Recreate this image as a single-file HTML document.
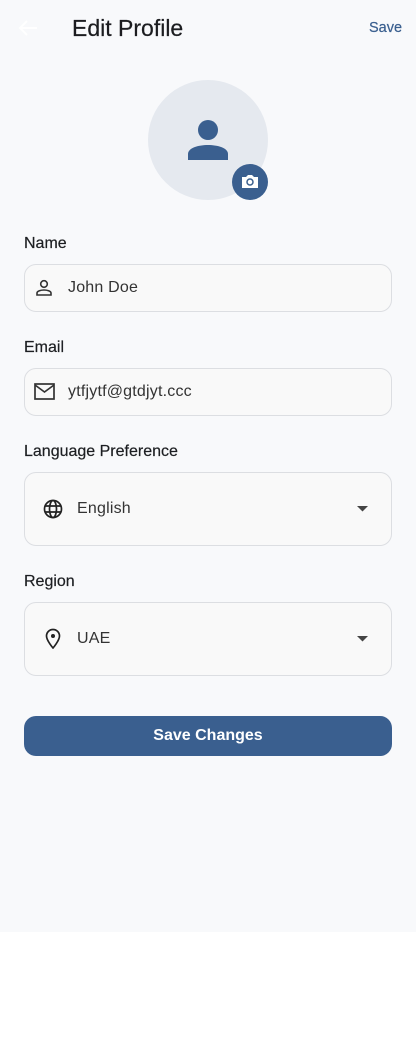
<!DOCTYPE html>
<html><head><meta charset="utf-8"><style>
*{box-sizing:border-box;margin:0;padding:0}
body{width:416px;height:1052px;background:#fff;font-family:"Liberation Sans",sans-serif;position:relative;overflow:hidden}
.bg{position:absolute;left:0;top:0;width:416px;height:932px;background:#f8f9fb}
.a{position:absolute}
.lbl{position:absolute;left:24px;font-size:16px;color:#1d1f22;-webkit-text-stroke:0.2px #1d1f22}
.box{position:absolute;left:24px;width:368px;border:1px solid #dcdee2;border-radius:12px;background:#f9f9f9}
.txt{position:absolute;font-size:16px;color:#333;letter-spacing:.2px}
</style></head><body>
<div class="bg"></div>
<svg class="a" style="left:17px;top:18px" width="22" height="20" viewBox="0 0 22 20"><path d="M20 10H3M10 3L3 10L10 17" stroke="#fff" stroke-width="2" fill="none"/></svg>
<div class="a" style="left:72px;top:15px;font-size:23px;color:#1c1d20;-webkit-text-stroke:0.2px #1c1d20">Edit Profile</div>
<div class="a" style="left:369px;top:20px;font-size:14.5px;color:#3a5f8f;-webkit-text-stroke:0.2px #3a5f8f">Save</div>
<div class="a" style="left:148px;top:80px;width:120px;height:120px;border-radius:50%;background:#e5e9ef"></div>
<svg class="a" style="left:186px;top:118px" width="44" height="44" viewBox="0 0 44 44"><circle cx="22" cy="12" r="10" fill="#3a5f8f"/><path d="M2 42V36C2 30 12 27 22 27S42 30 42 36V42Z" fill="#3a5f8f"/></svg>
<div class="a" style="left:232px;top:164px;width:36px;height:36px;border-radius:50%;background:#3a5f8f"></div>
<svg class="a" style="left:241px;top:173px" width="18" height="16" viewBox="0 0 18 16"><path d="M1 4h4l2-2h4l2 2h4v11H1Z" fill="#fff"/><circle cx="9" cy="9" r="3" fill="none" stroke="#3a5f8f" stroke-width="1.5"/></svg>
<div class="lbl" style="top:235px">Name</div>
<div class="box" style="top:264px;height:48px"></div>
<svg class="a" style="left:35px;top:279px" width="18" height="18" viewBox="0 0 18 18"><circle cx="9" cy="5" r="3.3" fill="none" stroke="#333" stroke-width="1.6"/><path d="M2 16v-2c0-2 4-3 7-3s7 1 7 3v2Z" fill="none" stroke="#333" stroke-width="1.6"/></svg>
<div class="txt" style="left:68px;top:279px">John Doe</div>
<div class="lbl" style="top:339px">Email</div>
<div class="box" style="top:368px;height:48px"></div>
<svg class="a" style="left:34px;top:383px" width="21" height="17" viewBox="0 0 21 17"><rect x="1" y="1" width="19" height="15" fill="none" stroke="#333" stroke-width="1.7"/><path d="M1 2l9.5 7L20 2" fill="none" stroke="#333" stroke-width="1.7"/></svg>
<div class="txt" style="left:68px;top:383px">ytfjytf@gtdjyt.ccc</div>
<div class="lbl" style="top:443px">Language Preference</div>
<div class="box" style="top:472px;height:74px"></div>
<svg class="a" style="left:43px;top:499px" width="20" height="20" viewBox="0 0 20 20" fill="none" stroke="#222" stroke-width="1.7"><circle cx="10" cy="10" r="8.5"/><ellipse cx="10" cy="10" rx="3.5" ry="8.5"/><path d="M2 7h16M2 13h16"/></svg>
<div class="txt" style="left:77px;top:500px">English</div>
<svg class="a" style="left:357px;top:506px" width="12" height="6"><path d="M0 0h11L5.5 5.5Z" fill="#444"/></svg>
<div class="lbl" style="top:573px">Region</div>
<div class="box" style="top:602px;height:74px"></div>
<svg class="a" style="left:45px;top:628px" width="16" height="21" viewBox="0 0 16 21"><path d="M8 20C8 20 1.5 12.5 1.5 8a6.5 6.5 0 0113 0c0 4.5-6.5 12-6.5 12Z" fill="none" stroke="#222" stroke-width="1.7"/><circle cx="8" cy="8" r="2" fill="#222"/></svg>
<div class="txt" style="left:77px;top:630px">UAE</div>
<svg class="a" style="left:357px;top:636px" width="12" height="6"><path d="M0 0h11L5.5 5.5Z" fill="#444"/></svg>
<div class="a" style="left:24px;top:716px;width:368px;height:40px;border-radius:12px;background:#3a5f8f;color:#fff;font-size:16px;font-weight:bold;text-align:center;line-height:40px">Save Changes</div>
</body></html>
